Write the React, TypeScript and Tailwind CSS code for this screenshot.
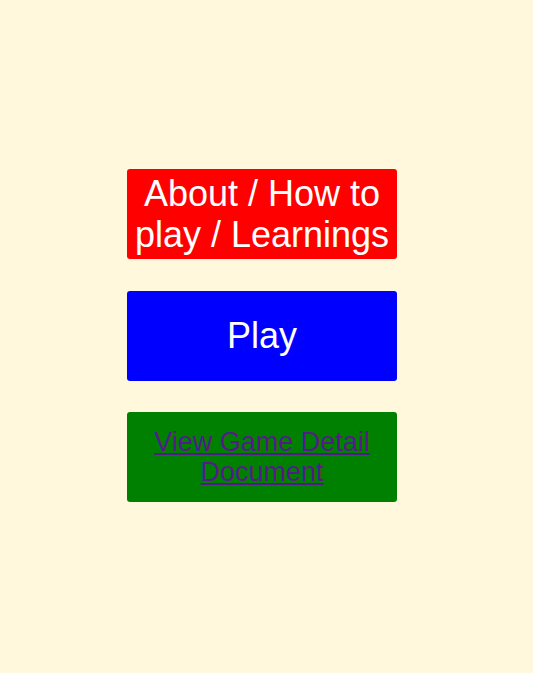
export default function App() {
  return (
    <div className="min-h-screen bg-[#fff8dc] flex flex-col items-center justify-center gap-[31.5px] pr-[9px] pb-[2px] font-['Liberation_Sans',Arial,sans-serif]">
      <button className="w-[270px] h-[90px] bg-[#ff0000] text-white text-[36px] leading-[1.15] rounded-[3px] px-1 flex items-center justify-center text-center">
        About / How to play / Learnings
      </button>
      <button className="w-[270px] h-[90px] bg-[#0000ff] text-white text-[36px] leading-[1.15] rounded-[3px] px-1 flex items-center justify-center text-center">
        Play
      </button>
      <div className="w-[270px] h-[90px] bg-[#008000] rounded-[3px] px-1 flex items-center justify-center text-center">
        <a href="#" className="text-[#551a8b] underline text-[27px] leading-[1.12]">
          View Game Detail Document
        </a>
      </div>
    </div>
  );
}
